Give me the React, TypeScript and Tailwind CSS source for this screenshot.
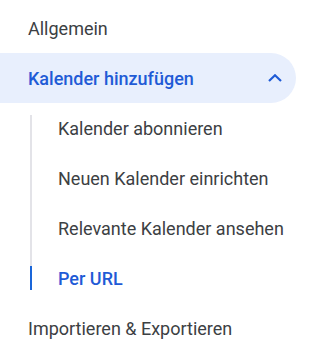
import React from "react";

const font = { fontFamily: "Roboto, 'Noto Sans', sans-serif" };

function SubItem({ label, first, active }: { label: string; first?: boolean; active?: boolean }) {
  return (
    <div className="flex h-[50px]">
      <div className="ml-[30px] flex w-[2px] flex-col">
        {first && <div className="h-[12px] w-[2px]" />}
        {active ? (
          <>
            <div className="h-[13px] w-[2px] bg-[#e3e3e8]" />
            <div className="h-[24px] w-[2px] bg-[#1a66d9]" />
            <div className="h-[13px] w-[2px]" />
          </>
        ) : (
          <div className="w-[2px] flex-1 bg-[#e3e3e8]" />
        )}
      </div>
      <div
        className={`ml-[26px] flex items-center text-[18px] ${
          active ? "font-medium text-[#1f5bd6]" : "text-[#3c4043]"
        }`}
      >
        {label}
      </div>
    </div>
  );
}

export default function App() {
  return (
    <div className="h-[357px] w-[312px] bg-white pt-[3px]" style={font}>
      <div className="flex h-[50px] items-center pl-[28px] text-[18px] text-[#3c4043]">Allgemein</div>
      <div className="flex h-[50px] w-[296px] items-center justify-between rounded-r-full bg-[#e8effd] pl-[28px] pr-[14px] text-[18px] font-medium text-[#1f5bd6]">
        <span>Kalender hinzufügen</span>
        <svg width="14" height="8" viewBox="0 0 14 8" fill="none">
          <path d="M1 7 L7 1.3 L13 7" stroke="#1f5bd6" strokeWidth="2.2" />
        </svg>
      </div>
      <SubItem label="Kalender abonnieren" first />
      <SubItem label="Neuen Kalender einrichten" />
      <SubItem label="Relevante Kalender ansehen" />
      <SubItem label="Per URL" active />
      <div className="flex h-[50px] items-center pl-[28px] text-[18px] text-[#3c4043]">Importieren &amp; Exportieren</div>
    </div>
  );
}
